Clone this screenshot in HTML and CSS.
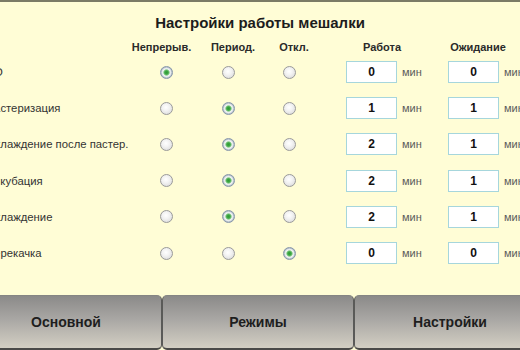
FILE: index.html
```html
<!DOCTYPE html>
<html lang="ru">
<head>
<meta charset="utf-8">
<title>Настройки работы мешалки</title>
<link rel="stylesheet" href="styles.css">
</head>
<body>
<div class="screen">
  <div class="topline"></div>
  <div class="content">
    <h1 class="title">Настройки работы мешалки</h1>
    <div class="head-row">
      <span class="h-spacer"></span>
      <span class="h h1">Непрерыв.</span>
      <span class="h h2">Период.</span>
      <span class="h h3">Откл.</span>
      <span class="h h4">Работа</span>
      <span class="h h5">Ожидание</span>
    </div>

    <div class="row">
      <span class="label">ПО</span>
      <span class="opt"><span class="radio on"></span></span>
      <span class="opt"><span class="radio"></span></span>
      <span class="opt opt3"><span class="radio"></span></span>
      <span class="box">0</span><span class="unit">мин</span>
      <span class="box">0</span><span class="unit">мин</span>
    </div>
    <div class="row">
      <span class="label">Пастеризация</span>
      <span class="opt"><span class="radio"></span></span>
      <span class="opt"><span class="radio on"></span></span>
      <span class="opt opt3"><span class="radio"></span></span>
      <span class="box">1</span><span class="unit">мин</span>
      <span class="box">1</span><span class="unit">мин</span>
    </div>
    <div class="row">
      <span class="label">Охлаждение после пастер.</span>
      <span class="opt"><span class="radio"></span></span>
      <span class="opt"><span class="radio on"></span></span>
      <span class="opt opt3"><span class="radio"></span></span>
      <span class="box">2</span><span class="unit">мин</span>
      <span class="box">1</span><span class="unit">мин</span>
    </div>
    <div class="row">
      <span class="label">Инкубация</span>
      <span class="opt"><span class="radio"></span></span>
      <span class="opt"><span class="radio on"></span></span>
      <span class="opt opt3"><span class="radio"></span></span>
      <span class="box">2</span><span class="unit">мин</span>
      <span class="box">1</span><span class="unit">мин</span>
    </div>
    <div class="row">
      <span class="label">Охлаждение</span>
      <span class="opt"><span class="radio"></span></span>
      <span class="opt"><span class="radio on"></span></span>
      <span class="opt opt3"><span class="radio"></span></span>
      <span class="box">2</span><span class="unit">мин</span>
      <span class="box">1</span><span class="unit">мин</span>
    </div>
    <div class="row">
      <span class="label">Перекачка</span>
      <span class="opt"><span class="radio"></span></span>
      <span class="opt"><span class="radio"></span></span>
      <span class="opt opt3"><span class="radio on"></span></span>
      <span class="box">0</span><span class="unit">мин</span>
      <span class="box">0</span><span class="unit">мин</span>
    </div>
  </div>
  <div class="tabs">
    <div class="tab">Основной</div>
    <div class="tab">Режимы</div>
    <div class="tab">Настройки</div>
  </div>
</div>
</body>
</html>
```

FILE: styles.css
```css
html, body {
  margin: 0;
  padding: 0;
}
body {
  width: 520px;
  height: 350px;
  overflow: hidden;
  background: #fffdd6;
  font-family: "Liberation Sans", Arial, sans-serif;
  color: #222;
}
.screen {
  width: 580px;
  height: 350px;
  margin-left: -30px;
  display: flex;
  flex-direction: column;
}
.topline {
  height: 2px;
  background: #7b7b66;
}
.content {
  padding-left: 16px;
}
.title {
  margin: 12px 0 0 -16px;
  font-size: 15px;
  line-height: 18px;
  font-weight: bold;
  text-align: center;
  color: #1c1c1c;
}
.head-row {
  display: flex;
  margin-top: 8px;
  height: 14px;
  font-size: 11px;
  line-height: 14px;
  font-weight: bold;
  color: #2a2a2a;
}
.h {
  text-align: center;
  white-space: nowrap;
  display: flex;
  justify-content: center;
}
.h-spacer { width: 149px; }
.h1 { width: 53px; }
.h2 { width: 90px; }
.h3 { width: 32px; }
.h4 { width: 144px; }
.h5 { width: 48px; }

.row {
  display: flex;
  align-items: center;
  height: 36.2px;
}
.label {
  width: 149px;
  font-size: 11.3px;
  color: #333;
  white-space: nowrap;
}
.opt {
  width: 62px;
  display: flex;
  justify-content: center;
}
.opt3 {
  width: 60px;
  margin-right: 27px;
}
.radio {
  width: 13px;
  height: 13px;
  box-sizing: border-box;
  border-radius: 50%;
  border: 1px solid #9a9a9a;
  background: radial-gradient(circle at 45% 40%, #ffffff 0, #f2f2f2 40%, #d4d4d4 100%);
}
.radio.on {
  border: 1px solid #8796aa;
  background: radial-gradient(circle at 50% 50%, #2f9a35 0, #3fa845 1.8px, #8fcf90 2.8px, #eef2f2 3.6px, #e4e8ea 4.4px, #b8c2cc 5.2px, #9fabb8 100%);
}
.box {
  width: 51px;
  height: 22px;
  box-sizing: border-box;
  border: 1px solid #a6d6dc;
  background: #fff;
  font-size: 12px;
  font-weight: bold;
  color: #111;
  display: flex;
  align-items: center;
  justify-content: center;
}
.unit {
  width: 51px;
  box-sizing: border-box;
  padding-left: 5px;
  font-size: 11px;
  color: #5c5c5c;
}
.tabs {
  margin-top: auto;
  height: 55px;
  display: flex;
}
.tab {
  flex: 0 0 192px;
  box-sizing: border-box;
  border: 1px solid #5a5a58;
  border-top-color: #858583;
  border-bottom: 2px solid #4a4a48;
  border-radius: 5px;
  background: linear-gradient(to bottom, #8b8a89 0%, #a9a7a4 45%, #d3cfc3 100%);
  display: flex;
  align-items: center;
  justify-content: center;
  font-size: 14px;
  font-weight: bold;
  color: #1e1e1e;
}
```
